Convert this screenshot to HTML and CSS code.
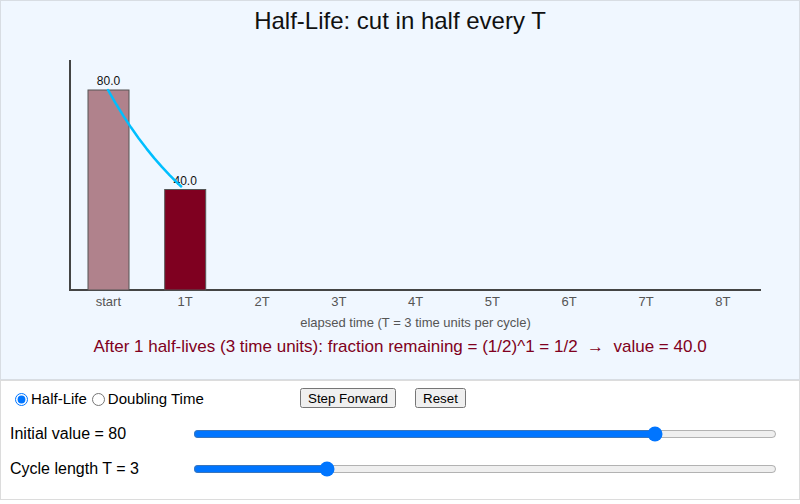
FILE: index.html
```html
<!DOCTYPE html>
<html>
<head>
<meta charset="UTF-8">
<title>Half-Life</title>
<link rel="stylesheet" href="styles.css">
</head>
<body>
	<div class="sketch">
		<div class="chartBox">
			<svg class="chart" width="798" height="378" viewBox="1 1 798 378">
				<text class="title" x="400" y="29">Half-Life: cut in half every T</text>
				<!-- axes -->
				<line class="axis" x1="70" y1="60" x2="70" y2="291"/>
				<line class="axis" x1="69" y1="290" x2="761" y2="290"/>
				<!-- bars -->
				<rect class="bar past" x="88" y="90" width="41" height="200"/>
				<rect class="bar now" x="164.7" y="189.5" width="41" height="100.5"/>
				<text class="val" x="108.5" y="85">80.0</text>
				<text class="val" x="185.2" y="184.5">40.0</text>
				<!-- decay curve -->
				<path class="curve" d="M108,90 L115.7,103.4 L123.4,115.9 L131.1,127.6 L138.8,138.4 L146.5,148.6 L154.2,158.1 L161.9,166.9 L169.6,175.1 L177.3,182.8 L181.2,186.5"/>
				<!-- ticks -->
				<text class="tick" x="108.4" y="306">start</text>
				<text class="tick" x="185.2" y="306">1T</text>
				<text class="tick" x="262" y="306">2T</text>
				<text class="tick" x="338.8" y="306">3T</text>
				<text class="tick" x="415.6" y="306">4T</text>
				<text class="tick" x="492.4" y="306">5T</text>
				<text class="tick" x="569.2" y="306">6T</text>
				<text class="tick" x="646" y="306">7T</text>
				<text class="tick" x="722.8" y="306">8T</text>
				<text class="tick" x="415.5" y="327">elapsed time (T = 3 time units per cycle)</text>
				<text class="status" x="400" y="352">After 1 half-lives (3 time units): fraction remaining = (1/2)^1 = 1/2 &#160;→&#160; value = 40.0</text>
			</svg>
		</div>
		<div class="controls">
			<div class="row">
				<div class="modes">
					<input type="radio" name="mode" id="modeHalf" checked><label for="modeHalf">Half-Life</label><input type="radio" name="mode" id="modeDouble"><label for="modeDouble">Doubling Time</label>
				</div>
				<button class="btnStep">Step Forward</button>
				<button class="btnReset">Reset</button>
			</div>
			<div class="row">
				<span class="label">Initial value = 80</span>
				<input class="slider" type="range" min="0" max="100" value="80">
			</div>
			<div class="row">
				<span class="label">Cycle length T = 3</span>
				<input class="slider" type="range" min="1" max="10" value="3">
			</div>
		</div>
	</div>
</body>
</html>
```
FILE: styles.css
```css
body {
	margin: 0;
	font-family: "Liberation Sans", Arial, sans-serif;
	background-color: white;
}

.sketch {
	width: 800px;
}

.chartBox {
	box-sizing: border-box;
	height: 380px;
	border: 1px solid #d8dde3;
	background-color: #f0f7ff;
}

.chart {
	display: block;
}

.chart text {
	font-family: "Liberation Sans", Arial, sans-serif;
	text-anchor: middle;
}

.title {
	font-size: 24px;
	fill: #111;
}

.axis {
	stroke: #444;
	stroke-width: 2;
}

.bar {
	stroke: #555;
	stroke-width: 1;
}
.bar.past {
	fill: #b0828c;
}
.bar.now {
	fill: #7f0020;
}

.val {
	font-size: 12px;
	fill: #111;
}

.curve {
	fill: none;
	stroke: #00bfff;
	stroke-width: 2.5;
	stroke-linecap: round;
	stroke-linejoin: round;
}

.tick {
	font-size: 13px;
	fill: #555;
}

.status {
	font-size: 17px;
	fill: #800020;
}

.controls {
	box-sizing: border-box;
	height: 120px;
	border: 1px solid #dcdcdc;
	padding: 0 9px;
}

.row {
	display: flex;
	align-items: center;
	height: 35px;
}

.modes {
	width: 290px;
	display: flex;
	align-items: center;
	font-size: 15px;
}
.modes input {
	margin: 1px 3px 0 5px;
}

button {
	font-family: "Liberation Sans", Arial, sans-serif;
	font-size: 13.33px;
	height: 20px;
	margin-top: -2px;
}
.btnStep {
	width: 96px;
}
.btnReset {
	width: 51px;
	margin-left: 19px;
}

.label {
	width: 183px;
	font-size: 16px;
}

.slider {
	width: 584px;
	margin: 0;
}
```
